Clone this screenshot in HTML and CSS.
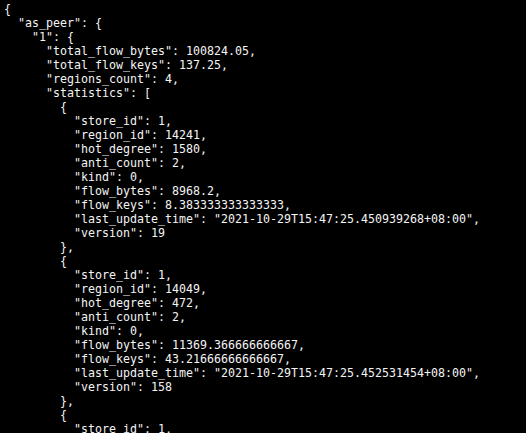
FILE: index.html
```html
<!DOCTYPE html>
<html>
<head>
<meta charset="utf-8">
<link rel="stylesheet" href="styles.css">
</head>
<body>
<pre class="term">{
  "as_peer": {
    "1": {
      "total_flow_bytes": 100824.05,
      "total_flow_keys": 137.25,
      "regions_count": 4,
      "statistics": [
        {
          "store_id": 1,
          "region_id": 14241,
          "hot_degree": 1580,
          "anti_count": 2,
          "kind": 0,
          "flow_bytes": 8968.2,
          "flow_keys": 8.383333333333333,
          "last_update_time": "2021-10-29T15:47:25.450939268+08:00",
          "version": 19
        },
        {
          "store_id": 1,
          "region_id": 14049,
          "hot_degree": 472,
          "anti_count": 2,
          "kind": 0,
          "flow_bytes": 11369.366666666667,
          "flow_keys": 43.21666666666667,
          "last_update_time": "2021-10-29T15:47:25.452531454+08:00",
          "version": 158
        },
        {
          "store_id": 1,
</pre>
</body>
</html>
```
FILE: styles.css
```css
html, body {
  margin: 0;
  padding: 0;
  background: #000;
  overflow: hidden;
}
.term {
  margin: 0;
  padding: 2px 0 0 4px;
  font-family: "DejaVu Sans Mono", "Liberation Mono", monospace;
  font-size: 11.63px;
  line-height: 14px;
  color: #f4f4f4;
  white-space: pre;
}
```
